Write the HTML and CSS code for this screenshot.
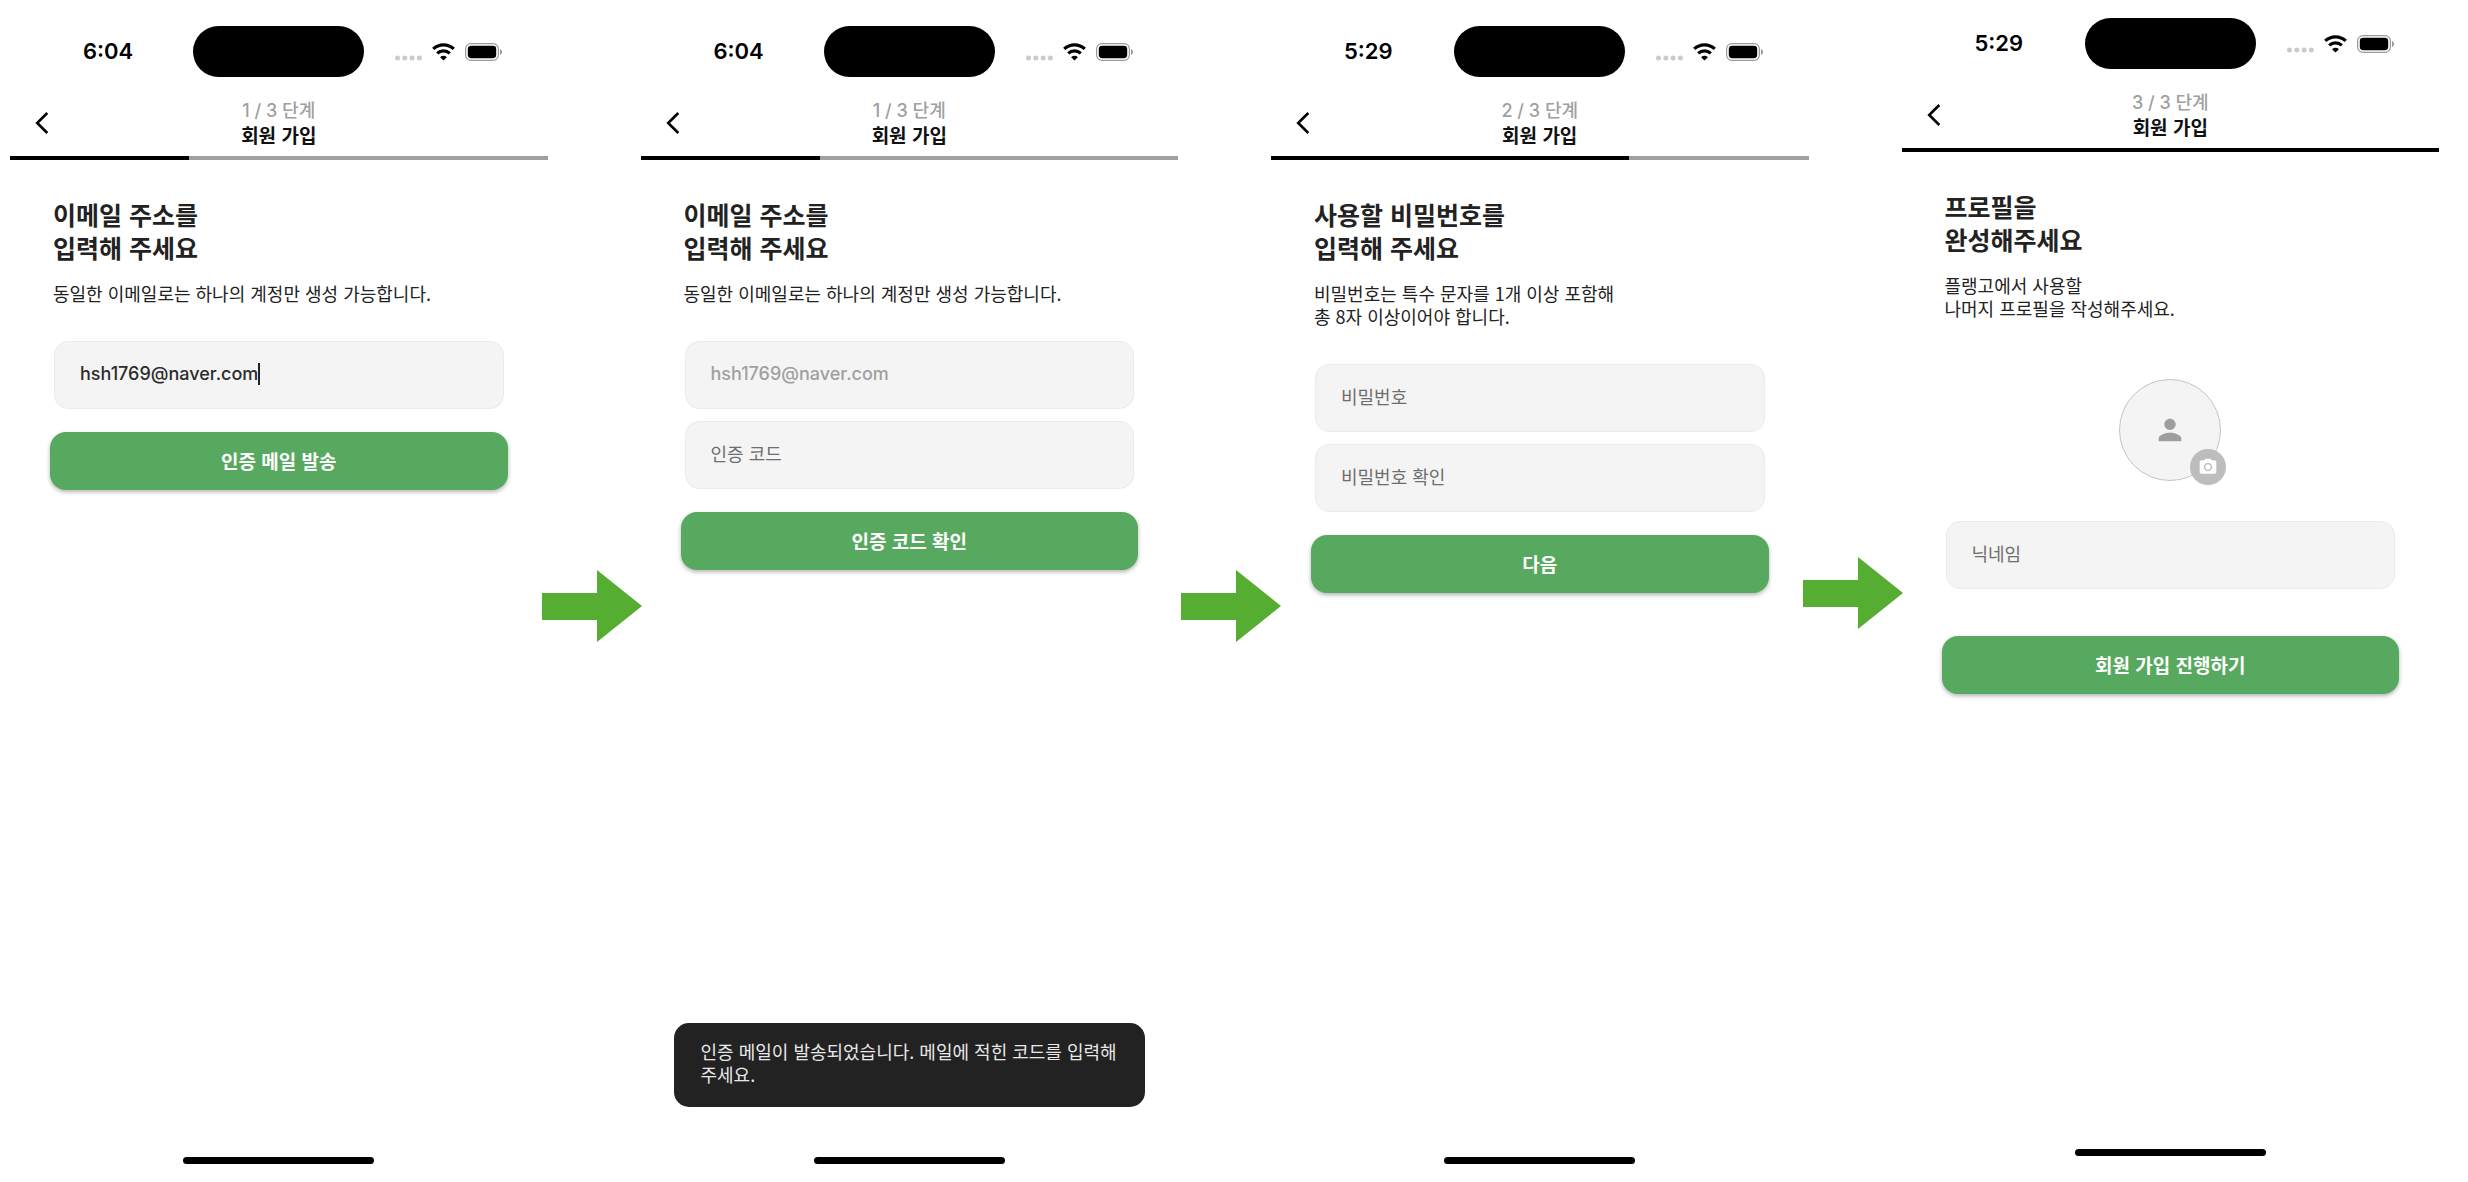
FILE: index.html
```html
<!DOCTYPE html>
<html lang="ko">
  <head>
    <meta charset="UTF-8" />
    <meta name="viewport" content="width=device-width, initial-scale=1.0" />
    <title>회원 가입</title>
    <link rel="stylesheet" href="styles.css" />
  </head>
  <body>
    <!-- Shared icons -->
    <svg class="sprite" aria-hidden="true">
      <symbol id="status-icons" viewBox="0 0 107 18">
        <g fill="#cbcbcb">
          <circle cx="2.5" cy="15" r="2.5" />
          <circle cx="9.8" cy="15" r="2.5" />
          <circle cx="17.1" cy="15" r="2.5" />
          <circle cx="24.4" cy="15" r="2.5" />
        </g>
        <g fill="none" stroke="#000" stroke-width="3.2">
          <path d="M38.2 5.9a15 15 0 0 1 20.6 0" />
          <path d="M42.2 10.3a9.2 9.2 0 0 1 12.6 0" />
        </g>
        <path d="M48.5 17.6l-3.4-3.4a4.9 4.9 0 0 1 6.8 0z" />
        <rect x="70.6" y="0.6" width="32.8" height="16.8" rx="5.4" fill="none" stroke="#999" stroke-width="1.2" />
        <rect x="72.8" y="2.8" width="28.4" height="12.4" rx="3.4" />
        <path d="M105 6v6c1.3-.5 2-1.7 2-3s-.7-2.5-2-3z" fill="#999" />
      </symbol>
      <symbol id="back" viewBox="0 0 14 24">
        <path d="M12.3 2L2.2 12l10.1 10" fill="none" stroke="#000" stroke-width="2.6" />
      </symbol>
      <symbol id="arrow" viewBox="0 0 100 72">
        <path d="M0 23h55V0l45 36-45 36V50H0z" fill="#55ad32" />
      </symbol>
    </svg>

    <main class="flow">
      <!-- Step 1: email -->
      <section class="screen">
        <div class="status-bar">
          <span class="time">6:04</span>
          <span class="island"></span>
          <svg class="status-icons"><use href="#status-icons" /></svg>
        </div>
        <header class="nav">
          <button class="back" type="button" aria-label="뒤로"><svg><use href="#back" /></svg></button>
          <div class="nav-title">
            <span class="step">1 / 3 단계</span>
            <span>회원 가입</span>
          </div>
        </header>
        <div class="progress"><div class="progress-bar" style="width: 33.33%"></div></div>
        <form class="content">
          <h1>이메일 주소를<br />입력해 주세요</h1>
          <p>동일한 이메일로는 하나의 계정만 생성 가능합니다.</p>
          <div class="fields">
            <label class="field">
              <input class="typing" type="email" aria-label="이메일" value="hsh1769@naver.com" />
              <span class="caret"></span>
            </label>
          </div>
          <button class="submit" type="button">인증 메일 발송</button>
        </form>
        <div class="home-indicator"></div>
      </section>

      <svg class="arrow" aria-hidden="true"><use href="#arrow" /></svg>

      <!-- Step 1: verification code -->
      <section class="screen">
        <div class="status-bar">
          <span class="time">6:04</span>
          <span class="island"></span>
          <svg class="status-icons"><use href="#status-icons" /></svg>
        </div>
        <header class="nav">
          <button class="back" type="button" aria-label="뒤로"><svg><use href="#back" /></svg></button>
          <div class="nav-title">
            <span class="step">1 / 3 단계</span>
            <span>회원 가입</span>
          </div>
        </header>
        <div class="progress"><div class="progress-bar" style="width: 33.33%"></div></div>
        <form class="content">
          <h1>이메일 주소를<br />입력해 주세요</h1>
          <p>동일한 이메일로는 하나의 계정만 생성 가능합니다.</p>
          <div class="fields">
            <label class="field">
              <input type="email" aria-label="이메일" value="hsh1769@naver.com" disabled />
            </label>
            <label class="field">
              <input type="text" aria-label="인증 코드" placeholder="인증 코드" />
            </label>
          </div>
          <button class="submit" type="button">인증 코드 확인</button>
        </form>
        <div class="toast" role="status">인증 메일이 발송되었습니다. 메일에 적힌 코드를 입력해 주세요.</div>
        <div class="home-indicator"></div>
      </section>

      <svg class="arrow arrow-near" aria-hidden="true"><use href="#arrow" /></svg>

      <!-- Step 2: password -->
      <section class="screen">
        <div class="status-bar">
          <span class="time">5:29</span>
          <span class="island"></span>
          <svg class="status-icons"><use href="#status-icons" /></svg>
        </div>
        <header class="nav">
          <button class="back" type="button" aria-label="뒤로"><svg><use href="#back" /></svg></button>
          <div class="nav-title">
            <span class="step">2 / 3 단계</span>
            <span>회원 가입</span>
          </div>
        </header>
        <div class="progress"><div class="progress-bar" style="width: 66.67%"></div></div>
        <form class="content">
          <h1>사용할 비밀번호를<br />입력해 주세요</h1>
          <p>비밀번호는 특수 문자를 1개 이상 포함해<br />총 8자 이상이어야 합니다.</p>
          <div class="fields">
            <label class="field">
              <input type="password" aria-label="비밀번호" placeholder="비밀번호" />
            </label>
            <label class="field">
              <input type="password" aria-label="비밀번호 확인" placeholder="비밀번호 확인" />
            </label>
          </div>
          <button class="submit" type="button">다음</button>
        </form>
        <div class="home-indicator"></div>
      </section>

      <svg class="arrow arrow-raised" aria-hidden="true"><use href="#arrow" /></svg>

      <!-- Step 3: profile -->
      <section class="screen screen-raised">
        <div class="status-bar">
          <span class="time">5:29</span>
          <span class="island"></span>
          <svg class="status-icons"><use href="#status-icons" /></svg>
        </div>
        <header class="nav">
          <button class="back" type="button" aria-label="뒤로"><svg><use href="#back" /></svg></button>
          <div class="nav-title">
            <span class="step">3 / 3 단계</span>
            <span>회원 가입</span>
          </div>
        </header>
        <div class="progress"><div class="progress-bar" style="width: 100%"></div></div>
        <form class="content profile">
          <h1>프로필을<br />완성해주세요</h1>
          <p>플랭고에서 사용할<br />나머지 프로필을 작성해주세요.</p>
          <button class="avatar" type="button" aria-label="프로필 사진 선택">
            <svg class="person" viewBox="0 0 24 24" fill="#9e9e9e">
              <path d="M12 12c2.21 0 4-1.79 4-4s-1.79-4-4-4-4 1.79-4 4 1.79 4 4 4zm0 2c-2.67 0-8 1.34-8 4v2h16v-2c0-2.66-5.33-4-8-4z" />
            </svg>
            <span class="camera">
              <svg viewBox="0 0 24 24" fill="#fff">
                <circle cx="12" cy="12" r="3.2" />
                <path d="M9 2L7.17 4H4c-1.1 0-2 .9-2 2v12c0 1.1.9 2 2 2h16c1.1 0 2-.9 2-2V6c0-1.1-.9-2-2-2h-3.17L15 2H9zm3 15c-2.76 0-5-2.24-5-5s2.24-5 5-5 5 2.24 5 5-2.24 5-5 5z" />
              </svg>
            </span>
          </button>
          <div class="fields">
            <label class="field">
              <input type="text" aria-label="닉네임" placeholder="닉네임" />
            </label>
          </div>
          <button class="submit" type="button">회원 가입 진행하기</button>
        </form>
        <div class="home-indicator"></div>
      </section>
    </main>
  </body>
</html>
```
FILE: styles.css
```css
* {
  box-sizing: border-box;
}
body {
  margin: 0;
  background-color: #fff;
  color: #222;
  font-family: "Noto Sans CJK KR", "Noto Sans", sans-serif;
  font-size: 18px;
  line-height: 23px;
}
button,
input {
  font: inherit;
  border: none;
  padding: 0;
}
button {
  cursor: pointer;
}
.sprite {
  position: absolute;
  width: 0;
  height: 0;
}
.flow {
  display: flex;
  min-height: 100vh;
  padding: 0 29px 0 10px;
}

/* Phone screen */
.screen {
  flex: 1;
  min-width: 0;
  display: flex;
  flex-direction: column;
  padding: 26px 0 18px;
}
.screen-raised {
  padding: 18px 0 26px;
}
.status-bar {
  display: grid;
  grid-template-columns: 1fr auto 1fr;
  align-items: center;
}
.time {
  padding-left: 73px;
  color: #000;
  font-family: Inter, sans-serif;
  font-size: 22px;
  font-weight: 600;
}
.island {
  width: 171px;
  height: 51px;
  border-radius: 26px;
  background-color: #000;
}
.status-icons {
  width: 107px;
  height: 18px;
  margin-left: 31px;
}

/* Header */
.nav {
  display: grid;
  grid-template-columns: 1fr auto 1fr;
  align-items: center;
  padding: 22px 24px 9px;
}
.back {
  width: 16px;
  height: 24px;
  background: none;
}
.back svg {
  display: block;
  width: 16px;
  height: 24px;
}
.nav-title {
  display: flex;
  flex-direction: column;
  align-items: center;
  color: #111;
  font-size: 19px;
  font-weight: 700;
  line-height: 24px;
}
.step {
  color: #a0a0a0;
  font-family: Inter, "Noto Sans CJK KR", sans-serif;
  font-size: 18px;
  font-weight: 500;
}
.progress {
  background-color: #a0a0a0;
}
.progress-bar {
  height: 4px;
  background-color: #000;
}

/* Form */
.content {
  display: flex;
  flex-direction: column;
  padding: 38px 40px 0;
}
h1 {
  margin: 0 3px 18px;
  font-size: 25px;
  font-weight: 700;
  line-height: 33px;
}
p {
  margin: 0 3px 36px;
}
.fields {
  display: flex;
  flex-direction: column;
  gap: 12px;
  margin: 0 4px 23px;
}
.field {
  display: flex;
  align-items: center;
  height: 68px;
  padding: 0 25px 3px;
  border: 1px solid #ebebeb;
  border-radius: 14px;
  background-color: #f4f4f4;
}
.field input {
  flex: 1;
  min-width: 0;
  background: none;
  outline: none;
  color: #2c2c2c;
}
.field input[type="email"] {
  font-family: Inter, sans-serif;
  font-weight: 500;
}
.field .typing {
  flex: none;
  field-sizing: content;
}
.field input:disabled {
  color: #a0a0a0;
}
.field input::placeholder {
  color: #6e6e6e;
}
.caret {
  width: 2px;
  height: 22px;
  background-color: #222;
}
.submit {
  height: 58px;
  padding-bottom: 2px;
  border-radius: 16px;
  background-color: #57a95f;
  box-shadow: 0 2px 4px rgba(0, 0, 0, 0.3);
  color: #fff;
  font-size: 19px;
  font-weight: 700;
}

/* Profile picture */
.avatar {
  position: relative;
  align-self: center;
  display: flex;
  justify-content: center;
  align-items: center;
  width: 102px;
  height: 102px;
  margin: 23px 0 40px;
  border: 1px solid #c4c4c4;
  border-radius: 50%;
  background-color: #f4f4f4;
}
.person {
  width: 34px;
  height: 34px;
}
.camera {
  position: absolute;
  right: -6px;
  bottom: -5px;
  display: flex;
  justify-content: center;
  align-items: center;
  width: 36px;
  height: 36px;
  border-radius: 50%;
  background-color: #bdbdbd;
}
.camera svg {
  width: 20px;
  height: 20px;
}
.profile .fields {
  margin-bottom: 47px;
}

.toast {
  margin: auto 33px 50px;
  padding: 17px 20px 21px 27px;
  border-radius: 15px;
  background-color: #222;
  color: #e8e8e8;
}
.home-indicator {
  align-self: center;
  width: 191px;
  height: 7px;
  margin-top: auto;
  border-radius: 4px;
  background-color: #000;
}
.toast + .home-indicator {
  margin-top: 0;
}

/* Arrows between the screens, slightly over their edges */
.arrow {
  z-index: 1;
  flex: none;
  width: 100px;
  height: 72px;
  margin: 570px -1px 0 -6px;
}
.arrow-near {
  margin-right: -10px;
  margin-left: 3px;
}
.arrow-raised {
  margin-top: 557px;
}
```
